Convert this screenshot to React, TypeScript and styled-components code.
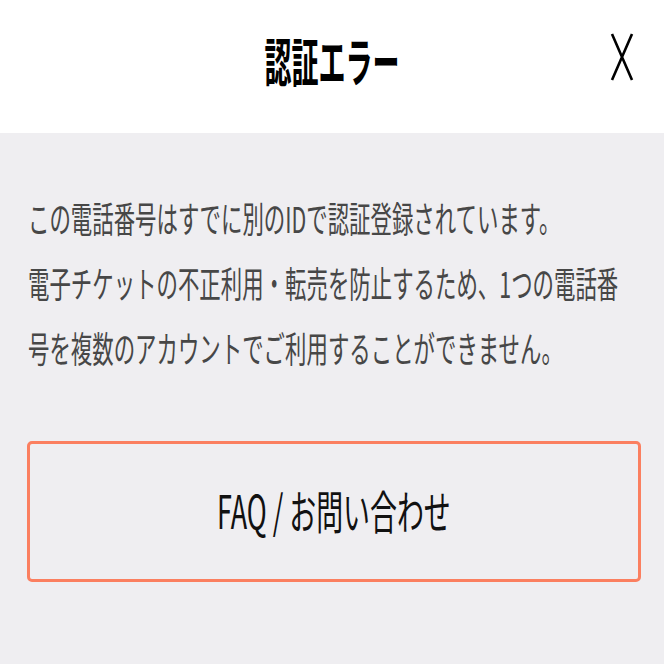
import React from 'react'
import styled, { createGlobalStyle } from 'styled-components'

const GlobalStyle = createGlobalStyle`
    html, body {
        margin: 0;
        padding: 0;
        background: #efeef1;
        overflow: hidden;
    }
    body {
        font-family: "Noto Sans CJK JP", "Noto Sans", sans-serif;
    }
`

const lines = [
    'この電話番号はすでに別のIDで認証登録されています。',
    '電子チケットの不正利用・転売を防止するため、1つの電話番',
    '号を複数のアカウントでご利用することができません。',
]

const App = () => {
    return (
        <Page>
            <GlobalStyle />

            <Header>
                <span />
                <Title>
                    <Squeeze $sx={0.52}>認証エラー</Squeeze>
                </Title>
                <CloseButton aria-label="閉じる">
                    <svg width="24" height="48" viewBox="0 0 24 48">
                        <path d="M2 1 L22 47 M22 1 L2 47" stroke="#000" strokeWidth="2.6" fill="none" />
                    </svg>
                </CloseButton>
            </Header>

            <Body>
                <Message>
                    {lines.map((line) => (
                        <Line key={line}>{line}</Line>
                    ))}
                </Message>

                <FaqButton>
                    <Squeeze $sx={0.585}>FAQ / お問い合わせ</Squeeze>
                </FaqButton>
            </Body>
        </Page>
    )
}

export default App

const Page = styled.div`
    width: 664px;
    height: 664px;
    display: flex;
    flex-direction: column;
    background: #efeef1;
`
const Header = styled.header`
    height: 133px;
    background: #fff;
    display: grid;
    grid-template-columns: 1fr auto 1fr;
    align-items: center;
`
const Squeeze = styled.span<{ $sx: number }>`
    display: inline-block;
    white-space: nowrap;
    transform: scaleX(${(p) => p.$sx});
    transform-origin: center;
`
const Title = styled.h1`
    margin: 0;
    margin-bottom: 14px;
    font-size: 52px;
    font-weight: 700;
    color: #000;
    line-height: 1;
    display: flex;
    justify-content: center;
`
const CloseButton = styled.button`
    justify-self: end;
    margin-right: 30px;
    margin-bottom: 20px;
    padding: 0;
    border: none;
    background: none;
    display: flex;
`
const Body = styled.main`
    flex: 1;
    display: flex;
    flex-direction: column;
    padding: 52px 23px 0 27px;
`
const Message = styled.div`
    font-size: 36px;
    line-height: 65px;
    color: #474747;
    padding-left: 1px;
`
const Line = styled.div`
    white-space: nowrap;
    transform: scaleX(0.595);
    transform-origin: left;
`
const FaqButton = styled.button`
    margin-top: 61px;
    height: 141px;
    padding-bottom: 6px;
    box-sizing: border-box;
    border: 3px solid #fb7f60;
    border-radius: 5px;
    background: transparent;
    font-family: "Noto Sans CJK JP", "Noto Sans", sans-serif;
    font-size: 46px;
    color: #111;
    display: flex;
    align-items: center;
    justify-content: center;
    overflow: visible;
`
